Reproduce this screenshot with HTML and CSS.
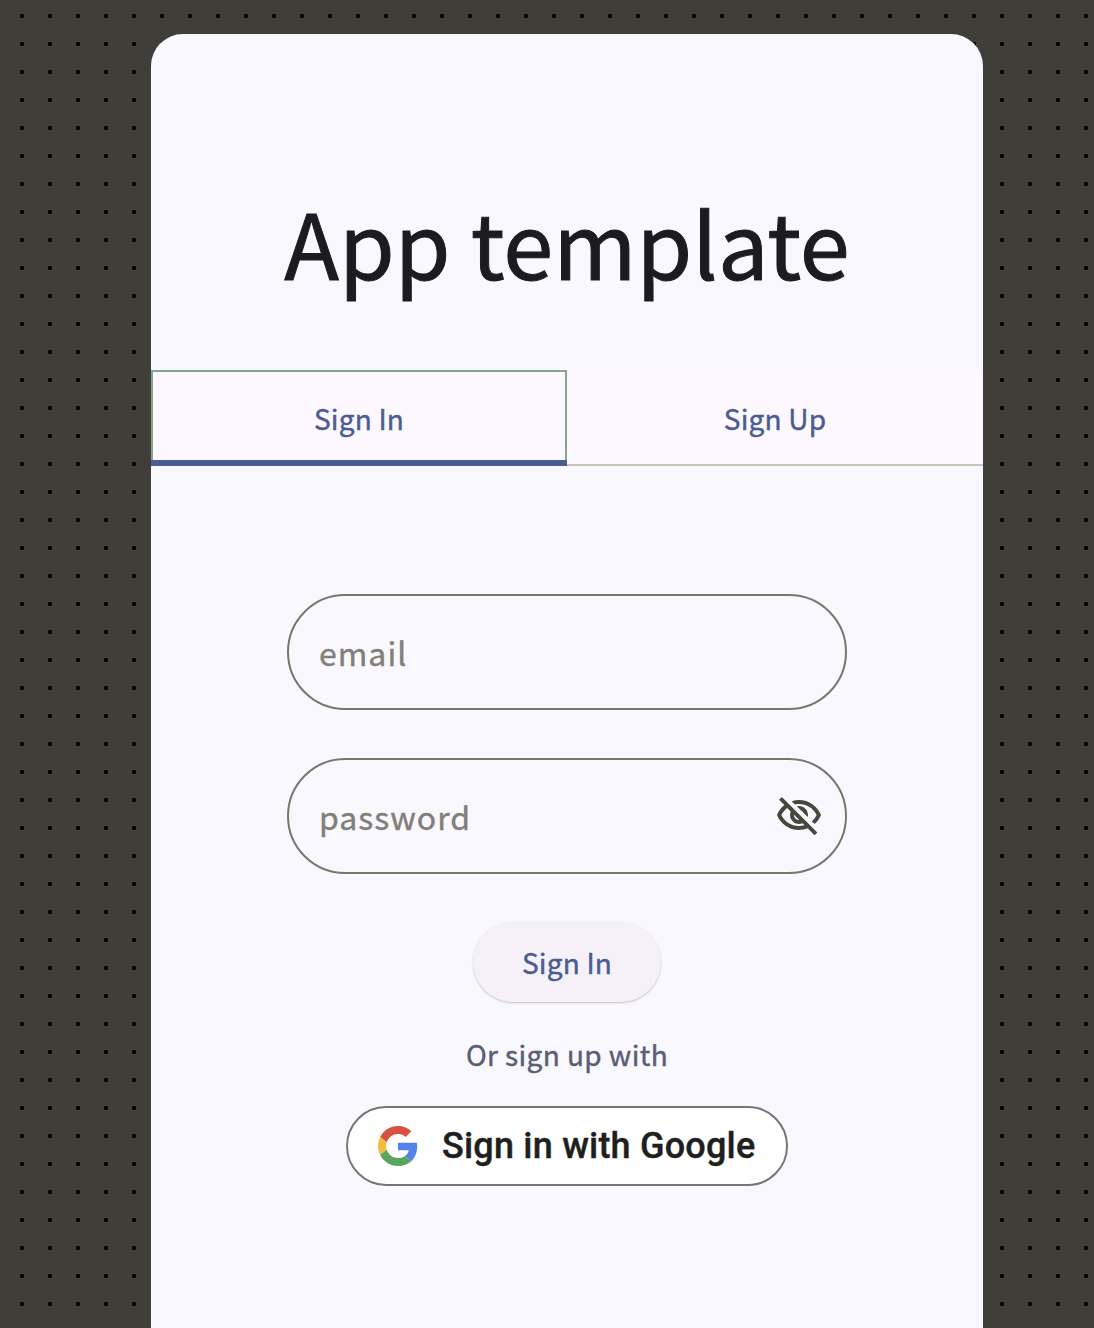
FILE: index.html
```html
<!DOCTYPE html>
<html lang="en">
<head>
<meta charset="utf-8">
<title>App template</title>
<link rel="stylesheet" href="styles.css">
</head>
<body>
<main class="screen">
  <h1 class="title">App template</h1>
  <nav class="tabs">
    <a class="tab tab-active">Sign In</a>
    <a class="tab">Sign Up</a>
  </nav>
  <form class="form">
    <label class="field"><span>email</span></label>
    <label class="field">
      <span>password</span>
      <svg class="eye" viewBox="0 0 24 24" fill="currentColor"><path d="M12 6c3.79 0 7.17 2.13 8.82 5.5-.59 1.22-1.42 2.27-2.41 3.12l1.41 1.41c1.39-1.23 2.49-2.77 3.18-4.53C21.27 7.11 17 4 12 4c-1.27 0-2.49.2-3.64.57l1.65 1.65C10.66 6.09 11.32 6 12 6zm-1.07 1.14L13 9.21c.57.25 1.03.71 1.28 1.28l2.07 2.07c.08-.34.14-.7.14-1.07C16.5 9.01 14.48 7 12 7c-.37 0-.72.05-1.07.14zM2.01 3.87l2.68 2.68C3.06 7.83 1.77 9.53 1 11.5 2.73 15.89 7 19 12 19c1.52 0 2.98-.29 4.32-.82l3.42 3.42 1.41-1.41L3.42 2.45 2.01 3.87zm7.5 7.5l2.61 2.61c-.04.01-.08.02-.12.02-1.38 0-2.5-1.12-2.5-2.5 0-.05.01-.08.01-.13zm-3.4-3.4l1.75 1.75c-.23.55-.36 1.15-.36 1.78 0 2.48 2.02 4.5 4.5 4.5.63 0 1.23-.13 1.77-.36l.98.98c-.88.24-1.8.38-2.75.38-3.79 0-7.17-2.13-8.82-5.5.7-1.43 1.72-2.61 2.93-3.53z"/></svg>
    </label>
    <button class="submit" type="button">Sign In</button>
    <p class="alt">Or sign up with</p>
    <button class="google" type="button">
      <svg class="logo" viewBox="0 0 48 48">
        <path fill="#d85140" d="M24 9.5c3.54 0 6.71 1.22 9.21 3.6l6.85-6.85C35.9 2.38 30.47 0 24 0 14.62 0 6.51 5.38 2.56 13.22l7.98 6.19C12.43 13.72 17.74 9.5 24 9.5z"/>
        <path fill="#5383ec" d="M46.98 24.55c0-1.57-.15-3.09-.38-4.55H24v9.02h12.94c-.58 2.96-2.26 5.48-4.78 7.18l7.73 6c4.51-4.18 7.09-10.36 7.09-17.65z"/>
        <path fill="#f1be42" d="M10.53 28.59c-.48-1.45-.76-2.99-.76-4.59s.27-3.14.76-4.59l-7.98-6.19C.92 16.46 0 20.12 0 24c0 3.88.92 7.54 2.56 10.78l7.97-6.19z"/>
        <path fill="#58a55c" d="M24 48c6.48 0 11.93-2.13 15.89-5.81l-7.73-6c-2.15 1.45-4.92 2.3-8.16 2.3-6.26 0-11.57-4.22-13.47-9.91l-7.98 6.19C6.51 42.62 14.62 48 24 48z"/>
      </svg>
      <span>Sign in with Google</span>
    </button>
  </form>
</main>
</body>
</html>
```
FILE: styles.css
```css
* { box-sizing: border-box; }
body {
  margin: 0;
  height: 1328px;
  overflow: hidden;
  padding: 34px 111px 0 151px;
  background: #403e39 radial-gradient(circle, #000 1.9px, transparent 2.5px) 8px 2px / 28px 28px;
  font-family: "Noto Sans CJK JP", sans-serif;
  -webkit-text-stroke: .4px currentColor;
}
.screen {
  height: 1294px;
  background: #faf8ff;
  border-radius: 32px 32px 0 0;
}
.title {
  margin: 0;
  height: 336px;
  padding-top: 156px;
  font-size: 90px;
  line-height: 103px;
  font-weight: 400;
  -webkit-text-stroke: 1px currentColor;
  color: #1c1b1f;
  text-align: center;
  white-space: nowrap;
}
.tabs {
  display: grid;
  grid-template-columns: 1fr 1fr;
  height: 96px;
}
.tab {
  padding-top: 28px;
  background: #fdf8ff;
  box-shadow: inset 0 -2px #c8c7b7;
  font-size: 28px;
  line-height: 40px;
  letter-spacing: .2px;
  text-align: center;
  color: #4a5c92;
}
.tab-active { box-shadow: inset 0 -6px #4a5c92, inset 0 0 0 2px #85a58c; }
.form {
  display: flex;
  flex-direction: column;
  align-items: center;
  padding-top: 128px;
}
.field {
  display: flex;
  align-items: center;
  justify-content: space-between;
  width: 560px;
  height: 116px;
  margin-bottom: 48px;
  padding: 0 22px 0 30px;
  border: 2px solid #78776a;
  border-radius: 58px;
  font-size: 32px;
  line-height: 48px;
  letter-spacing: 1px;
  color: #807f78;
}
.eye { width: 48px; height: 48px; color: #47473b; }
.submit {
  width: 188px;
  height: 80px;
  padding: 0;
  border: 0;
  border-radius: 40px;
  background: #f6f1f9;
  box-shadow: 0 1px 2px rgba(0, 0, 0, .22);
  font: 400 28px/40px "Noto Sans CJK JP", sans-serif;
  -webkit-text-stroke: .4px currentColor;
  letter-spacing: .2px;
  color: #4a5c92;
}
.alt {
  margin: 32px 0;
  font-size: 28px;
  line-height: 40px;
  letter-spacing: .4px;
  color: #595e72;
}
.google {
  display: flex;
  align-items: center;
  gap: 24px;
  width: 442px;
  height: 80px;
  padding: 0 0 0 30px;
  border: 2px solid #747775;
  border-radius: 40px;
  background: #fff;
  font: 500 36px/40px Roboto, sans-serif;
  -webkit-text-stroke: .4px currentColor;
  letter-spacing: .2px;
  color: #1f1f1f;
  white-space: nowrap;
}
.logo { width: 40px; height: 40px; }
```
